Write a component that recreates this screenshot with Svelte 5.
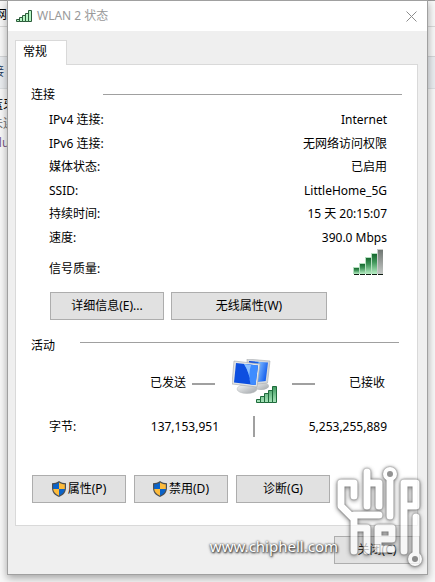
<script lang="ts">
  type Row = { label: string; value: string };

  const connection: Row[] = [
    { label: 'IPv4 连接:', value: 'Internet' },
    { label: 'IPv6 连接:', value: '无网络访问权限' },
    { label: '媒体状态:', value: '已启用' },
    { label: 'SSID:', value: 'LittleHome_5G' },
    { label: '持续时间:', value: '15 天 20:15:07' },
    { label: '速度:', value: '390.0 Mbps' },
  ];

  const sent = '137,153,951';
  const received = '5,253,255,889';

  // x, top and state of every bar in the quality meter
  const bars = [
    { x: 1, y: 18, on: true },
    { x: 7, y: 14, on: true },
    { x: 13, y: 8, on: true },
    { x: 19, y: 4, on: true },
    { x: 25, y: 0, on: false },
  ];
</script>

{#snippet shield()}
  <svg class="shield" viewBox="0 0 14 16" width="14" height="16" aria-hidden="true">
    <path d="M7 0C5 1.500 2.500 2.200 0 2.300V7c0 4.500 3 7.500 7 9 4-1.500 7-4.500 7-9V2.300C11.500 2.200 9 1.500 7 0z" fill="#4c4f52" />
    <path d="M7 1.400V8H1.200V3.300C3.500 3.200 5.500 2.500 7 1.400z" fill="#0a63c9" />
    <path d="M7 1.400V8h5.800V3.300C10.500 3.200 8.500 2.500 7 1.400z" fill="#fdbb3b" />
    <path d="M7 8H1.200c.3 3.200 2.600 5.400 5.800 6.700z" fill="#fdbb3b" />
    <path d="M7 8h5.800c-.3 3.200-2.600 5.400-5.800 6.700z" fill="#0a63c9" />
  </svg>
{/snippet}

<div class="desktop">
  <div class="behind" aria-hidden="true">
    <div class="crumb">网络</div>
    <div class="gap"></div>
    <div class="toolbar">连接</div>
    <div class="adapter">
      <div>蓝牙</div>
      <div class="muted">未连接</div>
      <div class="device">Bluetooth</div>
    </div>
  </div>

  <div class="dialog" role="dialog" aria-labelledby="title">
    <header>
      <svg class="signal" viewBox="0 0 16 12" width="16" height="12" aria-hidden="true">
        <path d="M0.500 11.500v-2h3v2zM3.500 11.500v-4h3v4zM6.500 11.500v-6h3v6zM9.500 11.500v-8h3v8zM12.500 11.500v-11h3v11z" />
      </svg>
      <h1 id="title">WLAN 2 状态</h1>
      <button type="button" class="close" aria-label="关闭">
        <svg viewBox="0 0 11 11" width="11" height="11" aria-hidden="true">
          <path d="M0.500 0.500l10 10M10.500 0.500l-10 10" />
        </svg>
      </button>
    </header>

    <main>
      <div role="tablist">
        <button type="button" role="tab" class="tab" aria-selected="true">常规</button>
      </div>

      <div class="panel" role="tabpanel">
        <h2>连接</h2>
        <dl>
          {#each connection as row}
            <div class="row">
              <dt>{row.label}</dt>
              <dd>{row.value}</dd>
            </div>
          {/each}
          <div class="row quality">
            <dt>信号质量:</dt>
            <dd>
              <svg viewBox="0 0 32 26" width="32" height="26" role="img" aria-label="4/5">
                <defs>
                  <linearGradient id="on" x2="0" y2="1">
                    <stop offset="0" stop-color="#16692f" />
                    <stop offset="0.4" stop-color="#3f9559" />
                    <stop offset="1" stop-color="#b9f0c6" />
                  </linearGradient>
                  <linearGradient id="off" x2="0" y2="1">
                    <stop offset="0" stop-color="#707773" />
                    <stop offset="1" stop-color="#c5c9c6" />
                  </linearGradient>
                </defs>
                {#each bars as bar}
                  <rect x={bar.x - 1} y={bar.y} width="6" height={25 - bar.y} fill={bar.on ? '#b5dfc0' : '#c8cbc9'} />
                  <rect x={bar.x} y={bar.y + 1} width="5" height={24 - bar.y} fill={bar.on ? 'url(#on)' : 'url(#off)'} />
                  <rect x={bar.x} y="25" width="5" height="1" fill="#0d1b11" />
                {/each}
              </svg>
            </dd>
          </div>
        </dl>

        <div class="actions details">
          <button type="button" class="btn medium">详细信息(E)...</button>
          <button type="button" class="btn wide">无线属性(W)</button>
        </div>

        <h2 class="activity-title">活动</h2>
        <div class="traffic">
          <span class="sent">已发送</span>
          <i class="dash"></i>
          <svg class="computers" viewBox="0 0 46 44" width="46" height="44" aria-hidden="true">
            <defs>
              <linearGradient id="screen" x2="1" y2="0.3">
                <stop offset="0" stop-color="#0b3fd0" />
                <stop offset="0.45" stop-color="#1768f2" />
                <stop offset="0.5" stop-color="#7db9ff" />
                <stop offset="1" stop-color="#1a63ee" />
              </linearGradient>
              <linearGradient id="foot" x2="1" y2="1">
                <stop offset="0" stop-color="#f7f8f8" />
                <stop offset="1" stop-color="#9fa4a8" />
              </linearGradient>
              <linearGradient id="step" x2="0" y2="1">
                <stop offset="0" stop-color="#3f9b60" />
                <stop offset="1" stop-color="#a9e5bb" />
              </linearGradient>
            </defs>
            <ellipse cx="29" cy="27" rx="8" ry="4" fill="url(#foot)" />
            <path d="M15 0l23 2-2.500 22L16 26z" fill="#d5d8da" stroke="#a9adb0" stroke-width="0.6" />
            <path d="M17 2l19 1.600-2.300 18.400L18 24z" fill="url(#screen)" />
            <path d="M14 26h8l1 5h-7z" fill="#aeb3b6" />
            <ellipse cx="15" cy="30" rx="10" ry="4.500" fill="url(#foot)" stroke="#b4b8bb" stroke-width="0.5" />
            <path d="M2 2l26 3-3 23L0 25z" fill="#e3e5e6" stroke="#a4a8ab" stroke-width="0.6" />
            <path d="M4 4l22 2.600-2.500 19.400L2 23.500z" fill="#0d4fe0" />
            <path d="M12 5l14 1.600-2.500 19.400-5-.6C18 18 16 11 12 5z" fill="#3f8cff" />
            <path d="M12 5l7 .9C17 12 17 18 18.500 25.400 18 18 16 11 12 5z" fill="#8cc0ff" />
            <g class="mini" transform="translate(24 26)">
              <path d="M0.500 17.500v-3h4v3zM4.500 17.500v-6h4v6zM8.500 17.500v-9h4v9zM12.500 17.500v-12h4v12zM16.500 17.500v-16h4v16z" fill="url(#step)" />
            </g>
          </svg>
          <i class="dash"></i>
          <span class="received">已接收</span>
        </div>
        <div class="bytes">
          <span>字节:</span>
          <output class="sent-bytes">{sent}</output>
          <i class="divider"></i>
          <output>{received}</output>
        </div>

        <div class="actions">
          <button type="button" class="btn">{@render shield()}属性(P)</button>
          <button type="button" class="btn">{@render shield()}禁用(D)</button>
          <button type="button" class="btn">诊断(G)</button>
        </div>
      </div>
    </main>

    <footer>
      <button type="button" class="btn dismiss">关闭(C)</button>
      <div class="watermark">
        <span>www.chiphell.com</span>
        <svg viewBox="0 0 94 108" width="94" height="108" aria-hidden="true">
          <path d="M22 33V20H9V43L22 56V88M22 52H47M22 65H35V88" />
          <path d="M35 9V43M35 20H47V43" />
          <path d="M58 12V53" />
          <path d="M72 88V20H84V43H72" />
          <path d="M60 76V65H46V76H60M46 76V86H60" />
          <path d="M84 54V94" />
          <circle cx="58" cy="11" r="7" />
          <circle cx="83" cy="96" r="7" />
          <circle class="hole" cx="58" cy="11" r="3" />
          <circle class="hole" cx="83" cy="96" r="3" />
        </svg>
      </div>
    </footer>
  </div>
</div>

<style>
  :global(body) {
    background: #f8f8f8;
  }
  .desktop {
    position: relative;
    overflow: hidden;
    padding: 0 7px 7px;
    font-family: 'Noto Sans', 'Noto Sans CJK SC', sans-serif;
    font-size: 12px;
    line-height: 20px;
    color: #000;
  }
  .behind {
    position: absolute;
    inset: 0;
    white-space: nowrap;
  }
  .crumb {
    height: 21px;
    padding-top: 4px;
    border-top: 1px solid #999;
    border-bottom: 1px solid #d9d9d9;
    text-indent: -5px;
  }
  .gap {
    height: 29px;
  }
  .toolbar {
    height: 26px;
    padding-top: 5px;
    border-top: 1px solid #d4d6d8;
    border-bottom: 1px solid #dcdfe2;
    background: #eaedf0;
    color: #1e395b;
    text-indent: -20px;
  }
  .adapter {
    padding-top: 6px;
    line-height: 19px;
    text-indent: -9px;
  }
  .muted {
    color: #6d6d6d;
  }
  .device {
    color: #7b5a86;
  }
  .dialog {
    position: relative;
    border: 1px solid #a0a0a0;
    background: #efefef;
    box-shadow: 0 3px 8px rgba(0, 0, 0, 0.35);
  }
  header {
    display: flex;
    align-items: center;
    height: 30px;
    padding: 0 10px 0 8px;
    background: #fff;
  }
  .signal {
    fill: #b6f5c4;
    stroke: #2c5c3a;
    stroke-width: 1;
  }
  h1 {
    flex: 1;
    margin: 0 0 0 5px;
    font-size: 12px;
    font-weight: 400;
    color: #999;
  }
  .close {
    display: flex;
    padding: 0;
    border: 0;
    background: none;
  }
  .close path {
    stroke: #8c8c8c;
  }
  main {
    padding: 9px 9px 0 7px;
  }
  .tab {
    display: block;
    position: relative;
    z-index: 1;
    width: 52px;
    height: 25px;
    margin-bottom: -1px;
    padding: 0 0 3px 7px;
    border: 1px solid #d9d9d9;
    border-bottom: 0;
    background: #fff;
    font: inherit;
    color: inherit;
    text-align: left;
  }
  .panel {
    padding: 20px 15px 22px;
    border: 1px solid #d9d9d9;
    background: #fff;
  }
  h2 {
    display: flex;
    align-items: center;
    gap: 48px;
    margin: 0;
    font-size: 12px;
    font-weight: 400;
  }
  h2::after {
    content: '';
    flex: 1;
    height: 1px;
    margin-bottom: 2px;
    background: #a0a0a0;
  }
  .activity-title {
    gap: 25px;
    margin-top: 16px;
    padding-right: 3px;
  }
  .activity-title::after {
    margin-bottom: 8px;
  }
  dl {
    margin: 3px 15px 0 18px;
  }
  .row {
    display: flex;
    align-items: center;
    justify-content: space-between;
    height: 23px;
  }
  .row:nth-child(odd) {
    height: 24px;
  }
  dd {
    margin: 0;
  }
  dl .quality:last-child {
    align-items: flex-end;
    height: 30px;
  }
  .quality dd {
    display: flex;
    padding: 0 2px 4px 0;
  }
  .actions {
    display: flex;
    gap: 8px;
    margin: 38px 0 0 1px;
  }
  .details {
    gap: 7px;
    margin: 13px 0 0 19px;
  }
  .btn {
    display: flex;
    align-items: center;
    justify-content: center;
    width: 94px;
    height: 28px;
    padding: 0;
    border: 1px solid #adadad;
    background: #e1e1e1;
    font: inherit;
    color: inherit;
  }
  .medium {
    width: 114px;
  }
  .wide {
    width: 156px;
  }
  .shield {
    margin-right: 2px;
  }
  .traffic {
    display: flex;
    align-items: center;
    justify-content: flex-end;
    gap: 14px;
    height: 44px;
    margin: 3px 17px 0 18px;
  }
  .sent {
    margin-right: -8px;
    padding-top: 3px;
  }
  .received {
    margin-left: 20px;
    padding-top: 3px;
  }
  .dash {
    width: 23px;
    height: 2px;
    margin-top: 6px;
    background: #a0a0a0;
  }
  .computers {
    margin-left: 3px;
  }
  .mini path {
    stroke: #1f6b3c;
    stroke-width: 1;
  }
  .bytes {
    display: grid;
    grid-template-columns: 1fr auto 2px 132px;
    align-items: center;
    height: 21px;
    margin: 13px 15px 0 18px;
  }
  .bytes output {
    text-align: right;
  }
  .bytes .sent-bytes {
    padding-right: 34px;
  }
  .divider {
    width: 2px;
    height: 21px;
    background: #a0a0a0;
  }
  footer {
    position: relative;
    display: flex;
    justify-content: flex-end;
    padding: 10px 7px;
  }
  .dismiss {
    width: 86px;
  }
  .watermark {
    position: absolute;
    right: 1px;
    bottom: 3px;
    display: flex;
    align-items: flex-end;
    color: #fff;
    font-size: 15px;
    line-height: 24px;
    pointer-events: none;
  }
  .watermark span {
    margin: 0 -6px 13px 0;
    text-shadow:
      0 0 2px #444,
      1px 1px 2px #444,
      0 1px 3px #666;
  }
  .watermark svg {
    fill: none;
    stroke: #fff;
    stroke-width: 7;
    stroke-linecap: round;
    stroke-linejoin: round;
    opacity: 0.7;
    filter: drop-shadow(0 0 1px #333) drop-shadow(0 1px 2px #555);
  }
  .watermark circle {
    fill: #fff;
    stroke: none;
  }
  .watermark .hole {
    fill: #666;
  }
</style>
